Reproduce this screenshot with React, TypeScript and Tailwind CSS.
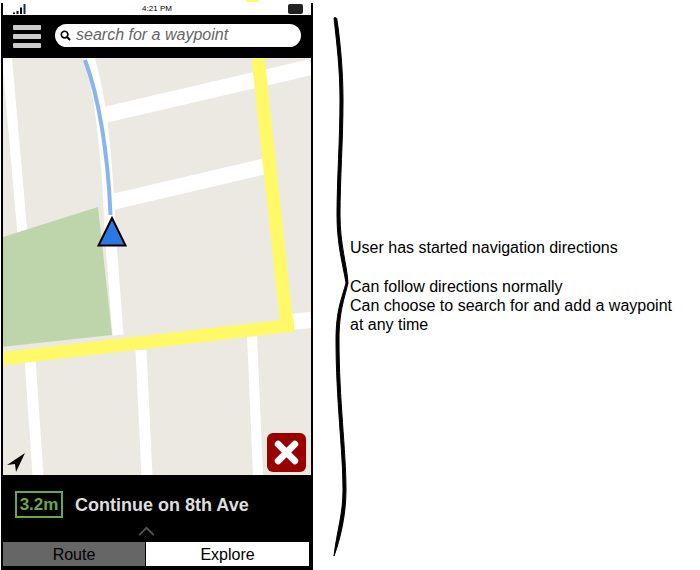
const SANS = "font-['Liberation_Sans',Arial,sans-serif]";

function MapDrawing() {
  return (
    <svg viewBox="3 58 308 417" className="block h-full w-full" preserveAspectRatio="none">
      <rect x="3" y="58" width="308" height="417" fill="#ebe9e2" />
      <g stroke="#ffffff" fill="none" strokeWidth="10">
        <path d="M7 58 L23 240" />
        <path d="M30 358 L38 476" strokeWidth="11" />
        <path d="M141 350 L147 476" strokeWidth="11" />
        <path d="M252 335 L258 476" />
        <path d="M100 116 L311 67" strokeWidth="16" />
        <path d="M108 203 L266 166" strokeWidth="16" />
        <path d="M290 322 L311 320" strokeWidth="16" />
      </g>
      <polygon points="0,238 98,207 112,335 0,347" fill="#bed4ab" />
      <path d="M89 58 C99 90 107 150 110 230 L118 335" stroke="#ffffff" strokeWidth="11" fill="none" />
      <path d="M85 60 C98 95 108 150 110.500 215" stroke="#8ab4ee" strokeWidth="4" fill="none" />
      <g stroke="#fff968" strokeWidth="13" fill="none">
        <path d="M258 58 L287 327" />
        <path d="M0 359 L294 325" />
      </g>
      <polygon points="112,218 98.500,245.500 125.500,245.500" fill="#2b78e4" stroke="#000000" strokeWidth="2" />
    </svg>
  );
}

function Brace() {
  return (
    <svg viewBox="0 0 24 570" className="block h-[570px] w-[24px] shrink-0" fill="#000000" stroke="#000000" strokeWidth="1">
      <path d="M3 18 C5 17 6 18 6 20 C9 40 12 70 12 100 C12 140 9 180 9 215 C9 245 16 265 17 283 C13 300 8 312 8 340 C8 400 15 450 15 490 C15 515 9 540 3 556 C6 530 12 515 12 490 C12 450 5 400 5 340 C5 310 11 298 15 283 C12 265 6 245 6 215 C6 180 9 140 9 100 C9 70 6 45 3 18 Z" />
    </svg>
  );
}

export default function App() {
  return (
    <div className={`relative flex h-[570px] w-[700px] overflow-hidden bg-white ${SANS}`}>
      <div className="absolute left-[246px] top-0 h-[2px] w-[12px] bg-[#fff968]" />
      <div className="ml-[1px] mr-[18px] mt-[3px] flex h-[567px] w-[312px] shrink-0 flex-col bg-black pb-[4px] pl-[2px] pr-[2px]">
        <div className="relative flex h-[12px] shrink-0 items-center justify-center bg-white text-[8px] leading-none text-black">
          <svg viewBox="0 0 14 10" className="absolute left-[9px] top-[1px] h-[10px] w-[14px]">
            <path d="M1 8.500h2V10H1zM4.500 7h2v3h-2zM8 3.500h2V10H8z" fill="#000000" />
            <path d="M11.500 0h2v10h-2z" fill="#0b2a66" />
          </svg>
          <span>4:21 PM</span>
          <div className="absolute right-[8px] top-[1px] h-[10px] w-[15px] rounded-[2px] bg-[#222222]" />
        </div>
        <div className="flex h-[43px] shrink-0 items-center pl-[10px] pr-[10px]">
          <div className="flex w-[28px] flex-col gap-[4px]">
            <div className="h-[5px] rounded-[1px] bg-[#cccccc]" />
            <div className="h-[5px] rounded-[1px] bg-[#cccccc]" />
            <div className="h-[5px] rounded-[1px] bg-[#cccccc]" />
          </div>
          <div className="mb-[2px] ml-[14px] flex h-[23px] flex-1 items-center rounded-[12px] bg-white pb-[1px] pl-[5px] text-[16px] italic text-[#666666]">
            <svg viewBox="0 0 12 12" className="mr-[5px] h-[11px] w-[11px]" fill="none" stroke="#000000" strokeWidth="1.800">
              <circle cx="5" cy="5" r="3.600" />
              <path d="M7.600 7.600L11 11" strokeWidth="2.200" />
            </svg>
            search for a waypoint
          </div>
        </div>
        <div className="relative min-h-0 flex-1 bg-[#ebe9e2]">
          <MapDrawing />
          <svg viewBox="0 0 18 19" className="absolute bottom-[3px] left-[4px] h-[19px] w-[18px]">
            <path d="M0 12L18 0L9 19L8 11Z" fill="#000000" />
          </svg>
          <div className="absolute bottom-[3px] right-[5px] flex h-[39px] w-[39px] items-center justify-center rounded-[6px] bg-[#990000]">
            <svg viewBox="0 0 24 24" className="h-[25px] w-[25px]" stroke="#ffffff" strokeWidth="6.500" strokeLinecap="round">
              <path d="M4 4L20 20M20 4L4 20" />
            </svg>
          </div>
        </div>
        <div className="relative flex h-[67px] shrink-0 items-start bg-black pl-[12px] pt-[16px]">
          <div className="flex h-[27px] w-[48px] items-center justify-center border-2 border-[#6aa84f] text-[17px] font-bold text-[#6aa84f]">
            3.2m
          </div>
          <div className="ml-[12px] flex h-[27px] items-center pt-[1px] text-[18px] font-bold text-[#dddddd]">
            Continue on 8th Ave
          </div>
          <svg viewBox="0 0 20 12" className="absolute bottom-[5px] left-[134px] h-[11px] w-[19px]" fill="none" stroke="#555555" strokeWidth="2">
            <path d="M2 10L10 2L18 10" />
          </svg>
        </div>
        <div className="flex h-[24px] shrink-0 text-[16px] leading-[26px] text-black">
          <div className="w-[142px] bg-[#666666] text-center">Route</div>
          <div className="ml-[1px] w-[163px] bg-white text-center">Explore</div>
        </div>
      </div>
      <Brace />
      <div className="ml-[-5px] whitespace-nowrap pt-[238px] text-[16px] leading-[19px] text-black">
        <p>User has started navigation directions</p>
        <p className="mt-[20px]">Can follow directions normally</p>
        <p>Can choose to search for and add a waypoint</p>
        <p>at any time</p>
      </div>
    </div>
  );
}
